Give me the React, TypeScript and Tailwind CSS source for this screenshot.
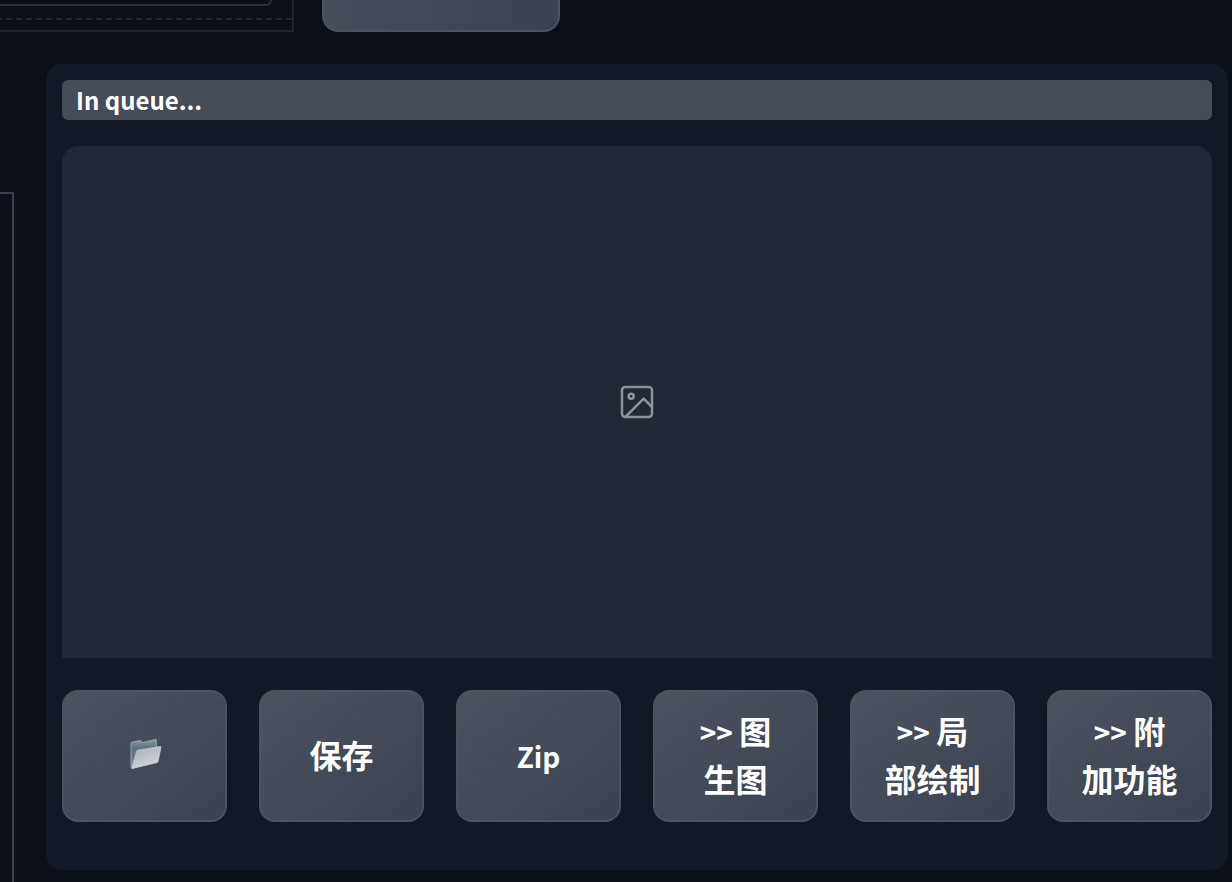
import { ReactNode } from "react";

const buttonStyle =
  "rounded-2xl border-2 border-[#4c535f] bg-linear-to-br from-[#4d535f] to-[#3a4151] bg-origin-border";

function FolderIcon() {
  return (
    <svg width="34" height="32" viewBox="0 0 34 32" aria-hidden="true">
      <defs>
        <linearGradient id="folder-back" x1="0" y1="0" x2="0" y2="1">
          <stop offset="0" stopColor="#8b9ba6" />
          <stop offset="0.3" stopColor="#5d707d" />
          <stop offset="1" stopColor="#7c8a95" />
        </linearGradient>
        <linearGradient id="folder-front" x1="0" y1="0" x2="0.6" y2="1">
          <stop offset="0" stopColor="#a4abb2" />
          <stop offset="0.5" stopColor="#bdc2c8" />
          <stop offset="1" stopColor="#d3d7dc" />
        </linearGradient>
      </defs>
      <path
        d="M3 5.2 3.6 4.2 12.6 2.4 14 4.6 28.2 1.4 28.6 10 6 30 3.6 30.4 3 29Z"
        fill="url(#folder-back)"
        stroke="#a3b0b9"
        strokeWidth="0.8"
        strokeLinejoin="round"
      />
      <path
        d="M8.6 13.2Q8.9 12.4 9.8 12.2L32.2 8.4Q33.2 8.4 33 9.4L30 23.6Q29.7 24.5 28.8 24.7L4.6 30.4Q3.8 30.4 4 29.6Z"
        fill="url(#folder-front)"
        stroke="#cbd1d6"
        strokeWidth="0.7"
        strokeLinejoin="round"
      />
    </svg>
  );
}

function ImageIcon() {
  return (
    <svg
      width="40"
      height="40"
      viewBox="0 0 24 24"
      fill="none"
      stroke="#8d929b"
      strokeWidth="1.5"
      strokeLinecap="round"
      strokeLinejoin="round"
      aria-hidden="true"
    >
      <rect x="3" y="3" width="18" height="18" rx="2" ry="2" />
      <circle cx="8.5" cy="8.5" r="1.5" />
      <polyline points="21 15 16 10 5 21" />
    </svg>
  );
}

// Latin text sits next to 32px Chinese characters at a smaller size
function Latin({ children }: { children: ReactNode }) {
  return <span className="text-[28px] leading-none">{children}</span>;
}

const actions: { label: string; content: ReactNode }[] = [
  { label: "打开文件夹", content: <FolderIcon /> },
  { label: "保存", content: "保存" },
  { label: "Zip", content: <Latin>Zip</Latin> },
  { label: ">> 图生图", content: <><Latin>&gt;&gt; </Latin>图<br />生图</> },
  { label: ">> 局部绘制", content: <><Latin>&gt;&gt; </Latin>局<br />部绘制</> },
  { label: ">> 附加功能", content: <><Latin>&gt;&gt; </Latin>附<br />加功能</> },
];

export default function App() {
  return (
    <div className="flex h-screen flex-col overflow-hidden bg-[#0b0f17] font-['Noto_Sans_CJK_SC',sans-serif] text-white">
      <div className="flex h-8 shrink-0 gap-7">
        <div className="flex w-[294px] flex-col border-r-2 border-b-2 border-[#1e222b]">
          <div className="mr-5 h-1.5 rounded-br-lg border-r-2 border-b-2 border-[#292d36]" />
          <svg className="mt-3 h-0.5 w-full" aria-hidden="true">
            <line x1="-4" y1="1" x2="100%" y2="1" stroke="#22262e" strokeWidth="2" strokeDasharray="6 4" />
          </svg>
        </div>
        <button
          type="button"
          aria-label="生成"
          className="w-[238px] rounded-b-2xl border-2 border-t-0 border-[#4c535f] bg-linear-to-r from-[#474d59] to-[#3b4151] bg-origin-border"
        />
      </div>

      <main className="mt-8 flex min-h-0 grow gap-8 pr-1">
        <div className="mt-32 w-3.5 shrink-0 border-t-2 border-r-2 border-[#3a404d]" />

        <section className="min-w-0 grow self-start rounded-2xl bg-[#121826] p-4 pb-12">
          <div className="flex h-10 items-center rounded-md bg-[#474c59] px-3.5 text-2xl font-bold">
            In queue...
          </div>

          <div className="mt-[26px] flex h-[512px] items-center justify-center rounded-t-2xl bg-[#222835]">
            <ImageIcon />
          </div>

          <div className="mt-8 grid grid-cols-6 gap-8">
            {actions.map(({ label, content }) => (
              <button
                key={label}
                type="button"
                aria-label={label}
                className={`flex h-[132px] items-center justify-center pb-1 text-[32px] leading-[48px] font-bold ${buttonStyle}`}
              >
                <span>{content}</span>
              </button>
            ))}
          </div>
        </section>
      </main>
    </div>
  );
}
